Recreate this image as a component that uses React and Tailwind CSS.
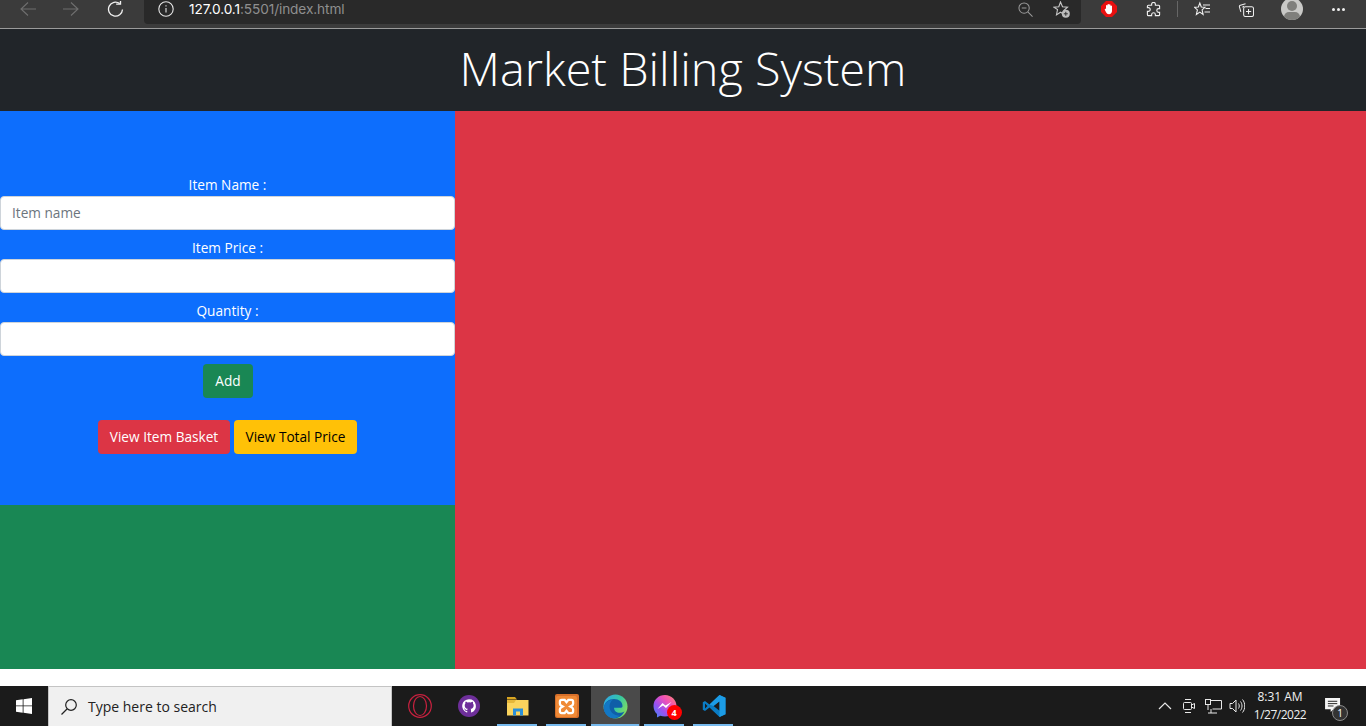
import React from "react";

const Back = ({ flip }) => (
  <svg width="16" height="14" viewBox="0 0 16 14" fill="none" stroke="#6f6f6f" strokeWidth="1.1" style={flip ? { transform: "scaleX(-1)" } : undefined}>
    <path d="M16 7H1M8 .5 1 7l7 6.500" />
  </svg>
);

const TaskCell = ({ children, underline, active }) => (
  <div className={`relative w-[49px] h-10 flex items-center justify-center ${active ? "bg-[#4a4a4a]" : ""}`}>
    {children}
    {underline && <div className={`absolute bottom-0 h-[2px] bg-[#76b9ed] ${active ? "left-0 right-[1px]" : "left-[4px] right-[5px]"}`} />}
  </div>
);

export default function App() {
  return (
    <div className="w-[1366px] h-[726px] overflow-hidden bg-white flex flex-col font-['Open_Sans','Noto_Sans',sans-serif]">
      {/* browser bar */}
      <div className="h-[29px] shrink-0 bg-[#3b3b3b] border-b border-[#9b9b9b] flex items-start">
        <div className="w-[144px] h-[18px] flex items-center shrink-0 pl-5 gap-[27px]">
          <Back />
          <Back flip />
          <svg width="17" height="17" viewBox="0 0 18 18" fill="none" stroke="#f2f2f2" strokeWidth="1.4" className="ml-[1px]">
            <path d="M13.500 2.800A7.400 7.400 0 1 0 16.400 9" />
            <path d="M9.700 3.300h4.600V0" />
          </svg>
        </div>
        <div className="w-[937px] h-6 pb-[6px] bg-[#292929] rounded-b-[4px] flex items-center shrink-0 pl-[14px]">
          <svg width="16" height="16" viewBox="0 0 16 16" fill="none" stroke="#e6e6e6" strokeWidth="1.1">
            <circle cx="8" cy="8" r="7.200" />
            <path d="M8 7v4.500M8 4.200v1.400" />
          </svg>
          <span className="ml-[15px] text-[13.650px] text-[#8f8f8f] whitespace-nowrap font-['Inter',sans-serif] tracking-[-0.1px]">
            <span className="text-white">127.0.0.1</span>:5501/index.html
          </span>
          <svg className="ml-auto" width="15" height="15" viewBox="0 0 16 16" fill="none" stroke="#9a9a9a" strokeWidth="1.100">
            <circle cx="6.500" cy="6.500" r="5.500" />
            <path d="M4 6.500h5M10.500 10.500 15.500 15.500" />
          </svg>
          <svg className="ml-[20px] mr-[11px]" width="17" height="17" viewBox="0 0 17 17" fill="none">
            <path d="M7.500 1l2 4.800 5 .4-3.700 3.300.7 3.900-4-2.200-4 2.700 1-5.300L.800 6.200l5-.4z" stroke="#c8c8c8" strokeWidth="1.100" />
            <circle cx="12.800" cy="12.800" r="4" fill="#bdbdbd" />
            <path d="M10.800 12.800h4M12.800 10.800v4" stroke="#333" strokeWidth="1" />
          </svg>
        </div>
        <div className="flex-1 h-[18px] flex items-center">
          <svg className="ml-[20px] shrink-0" width="16" height="16" viewBox="0 0 16 16">
            <path d="M5 0h6l5 5v6l-5 5H5l-5-5V5z" fill="#e81010" />
            <path d="M5 8V4.500a.8.8 0 0 1 1.500 0V3.600a.8.8 0 0 1 1.500 0v.2a.8.8 0 0 1 1.500.2v1a.8.8 0 0 1 1.500 0V10c0 2-1.300 3.200-3 3.200-1.500 0-2.300-.8-3-2L3.800 8.800c-.3-.8.700-1.400 1.200-.8z" fill="#fff" />
          </svg>
          <svg className="ml-[29px] shrink-0" width="15" height="15" viewBox="0 0 16 16" fill="none" stroke="#f0f0f0" strokeWidth="1.200">
            <path d="M6 2.400a2 2 0 0 1 4 0V3.500h3.500c.5 0 1 .4 1 1V7h-1a2 2 0 0 0 0 4h1v2.500c0 .6-.5 1-1 1H10v-1a2 2 0 0 0-4 0v1H2.500c-.6 0-1-.4-1-1V10h1a2 2 0 0 0 0-4h-1V4.500c0-.6.400-1 1-1H6z" />
          </svg>
          <div className="ml-[16px] w-px h-[16px] bg-[#666] shrink-0" />
          <svg className="ml-[16px] shrink-0" width="16" height="16" viewBox="0 0 16 16" fill="none" stroke="#f0f0f0" strokeWidth="1.100">
            <path d="M5.800 2l1.500 4 3.700.3-2.900 2.600 1 4.600-3.300-2.400-3.400 2.400 1-4.600L.5 6.300l3.900-.3zM9 4h7M11.500 7.500H16M10.500 11H16" />
          </svg>
          <svg className="ml-[28px] shrink-0" width="16" height="16" viewBox="0 0 17 17" fill="none" stroke="#f0f0f0" strokeWidth="1.100">
            <path d="M3 11.500 1.500 6c-.2-.8.200-1.400 1-1.600L8 3" />
            <path d="M5 7c0-1 .500-1.500 1.500-1.500" />
            <rect x="6" y="6" width="10.500" height="10.500" rx="2" />
            <path d="M11.200 8.500v5.500M8.500 11.200H14" />
          </svg>
          <div className="ml-[27px] w-[22px] h-[22px] rounded-full bg-[#c9c9c7] relative overflow-hidden shrink-0">
            <div className="absolute left-[6px] top-[3px] w-[10px] h-[10px] rounded-full bg-[#7f7f7c]" />
            <div className="absolute left-[3px] top-[14px] w-4 h-[10px] rounded-full bg-[#7f7f7c]" />
          </div>
          <div className="ml-[29px] flex gap-[2px] shrink-0">
            <div className="w-[3px] h-[3px] rounded-full bg-[#f0f0f0]" />
            <div className="w-[3px] h-[3px] rounded-full bg-[#f0f0f0]" />
            <div className="w-[3px] h-[3px] rounded-full bg-[#f0f0f0]" />
          </div>
        </div>
      </div>

      {/* page header */}
      <header className="h-[82px] shrink-0 bg-[#212529] flex items-center justify-center">
        <h1 className="text-white text-[46.800px] font-light leading-none -mt-[4px]">Market Billing System</h1>
      </header>

      {/* main */}
      <div className="h-[558px] shrink-0 flex">
        <div className="w-[455px] shrink-0 flex flex-col">
          <div className="h-[394px] bg-[#0d6efd] pt-[63px] flex flex-col items-center text-[13.650px] text-white">
            <label className="h-[22px] leading-[22px]">Item Name :</label>
            <input readOnly placeholder="Item name" className="w-full h-[34px] bg-white border border-[#ced4da] rounded-[4px] pl-[11px] pb-[1px] text-[13.650px] placeholder:text-[#6c757d] outline-none" />
            <label className="mt-[7px] h-[22px] leading-[22px]">Item Price :</label>
            <input readOnly className="w-full h-[34px] bg-white border border-[#ced4da] rounded-[4px] px-3 outline-none" />
            <label className="mt-[7px] h-[22px] leading-[22px]">Quantity :</label>
            <input readOnly className="w-full h-[34px] bg-white border border-[#ced4da] rounded-[4px] px-3 outline-none" />
            <button className="mt-2 w-[50px] h-[34px] bg-[#198754] rounded-[4px] text-white ml-[1px]">Add</button>
            <div className="mt-[22px] flex gap-1 ml-[-1px]">
              <button className="w-[132px] h-[34px] pl-[1px] bg-[#dc3545] rounded-[4px] text-white whitespace-nowrap">View Item Basket</button>
              <button className="w-[123px] h-[34px] pl-[1px] bg-[#ffc107] rounded-[4px] text-black whitespace-nowrap">View Total Price</button>
            </div>
          </div>
          <div className="flex-1 bg-[#198754]" />
        </div>
        <div className="flex-1 bg-[#dc3545]" />
      </div>

      <div className="h-[17px] shrink-0 bg-white" />

      {/* taskbar */}
      <div className="h-10 shrink-0 bg-[#1b1b1b] flex items-center">
        <div className="w-12 h-10 flex items-center justify-center shrink-0">
          <svg width="16" height="16" viewBox="0 0 16 16" fill="#fff">
            <path d="M0 2.300 6.700 1.300V7.500H0zM7.500 1.200 16 0v7.500H7.500zM0 8.300h6.700v6.400L0 13.700zM7.500 8.300H16V16l-8.500-1.200z" />
          </svg>
        </div>
        <div className="w-[344px] h-10 shrink-0 bg-[#f0f0f0] border border-[#c4c4c4] border-b-0 flex items-center pl-[11px]">
          <svg width="18" height="18" viewBox="0 0 18 18" fill="none" stroke="#222" strokeWidth="1.200">
            <circle cx="11" cy="7" r="5.300" />
            <path d="M7 11 1.500 16.500" />
          </svg>
          <span className="ml-[10px] text-[14px] text-[#222]">Type here to search</span>
        </div>
        <div className="w-[3px]" />
        <TaskCell>
          <svg width="24" height="24" viewBox="0 0 24 24" fill="none" stroke="#c8213f" strokeWidth="1.200">
            <circle cx="12" cy="12" r="11.300" />
            <ellipse cx="12" cy="12" rx="6.500" ry="9.500" />
          </svg>
        </TaskCell>
        <TaskCell>
          <svg width="22" height="22" viewBox="0 0 24 24">
            <circle cx="12" cy="12" r="12" fill="#6e2f9a" />
            <path fill="#fff" d="M12 4.500a7.500 7.500 0 0 0-2.400 14.600c.4.100.5-.2.500-.4v-1.400c-2.100.5-2.500-1-2.500-1-.3-.9-.8-1.100-.8-1.100-.7-.5 0-.5 0-.5.800.1 1.200.8 1.200.8.700 1.200 1.800.9 2.200.7.100-.5.300-.9.500-1.100-1.700-.2-3.400-.8-3.400-3.700 0-.8.300-1.500.8-2-.1-.2-.3-1 .1-2 0 0 .6-.2 2.100.8a7 7 0 0 1 3.800 0c1.500-1 2.100-.8 2.100-.8.400 1 .2 1.800.1 2 .5.500.8 1.200.8 2 0 2.900-1.800 3.500-3.400 3.700.3.200.5.700.5 1.400v2.100c0 .2.100.5.500.4A7.500 7.500 0 0 0 12 4.500z" />
          </svg>
        </TaskCell>
        <TaskCell underline>
          <svg width="22" height="20" viewBox="0 0 22 20">
            <path d="M0 1h8l2 2.500H0z" fill="#d9a521" />
            <path d="M0 4h21.500v15.500H0z" fill="#fbd45d" />
            <path d="M0 4h9L7 7H0z" fill="#e6b73a" />
            <path d="M6 12.500h10V19.500h-3v-4h-4v4H6z" fill="#2a8fd8" />
          </svg>
        </TaskCell>
        <TaskCell underline>
          <div className="w-6 h-6 bg-[#d8702a] rounded-[2px] flex items-center justify-center">
            <div className="w-[21px] h-[21px] bg-[#f08a36] rounded-[2px] flex items-center justify-center">
              <svg width="17" height="17" viewBox="0 0 18 18" fill="none" stroke="#fff" strokeWidth="2.400">
                <path d="M4 2h3l2 2.500L11 2h3c1.500 0 2 .8 2 2v2c0 1-.8 1.700-1.600 2.200L13 9l1.400.8c.8.500 1.600 1.200 1.600 2.200v2c0 1.200-.5 2-2 2h-3L9 13.500 7 16H4c-1.500 0-2-.8-2-2v-2c0-1 .8-1.700 1.600-2.200L5 9l-1.400-.8C2.800 7.700 2 7 2 6V4c0-1.200.5-2 2-2z" />
              </svg>
            </div>
          </div>
        </TaskCell>
        <TaskCell active underline>
          <svg width="25" height="25" viewBox="0 0 25 25">
            <defs>
              <linearGradient id="eA" x1="0" y1="0.200" x2="1" y2="0.700">
                <stop offset="0" stopColor="#2fa8e8" />
                <stop offset="0.550" stopColor="#37c8a0" />
                <stop offset="1" stopColor="#86de5c" />
              </linearGradient>
            </defs>
            <circle cx="12.500" cy="12.500" r="12" fill="url(#eA)" />
            <path d="M1 14C1 8 6 5 11 5c5 0 8.500 3 8.500 7 0 1-.5 1.700-1.500 1.700H11c0 3 2.500 5 5.500 5 2 0 3.500-.5 5-1.500-2 4.500-6 7-10 7C6 24.200 1 20 1 14z" fill="#0f5fa8" />
            <path d="M1 14c0-5 4-8 8.500-8-2 1.500-3 4-3 6.500 0 5 4 9 10 9.300-2 1.500-3.500 2.400-6 2.400C6 24.200 1 20 1 14z" fill="#1377c4" />
          </svg>
        </TaskCell>
        <TaskCell underline>
          <div className="relative w-6 h-6">
            <svg width="24" height="24" viewBox="0 0 24 24">
              <defs>
                <linearGradient id="mA" x1="0" y1="1" x2="1" y2="0">
                  <stop offset="0" stopColor="#3a8cf8" />
                  <stop offset="0.350" stopColor="#9a50f0" />
                  <stop offset="0.650" stopColor="#f04fb8" />
                  <stop offset="1" stopColor="#ff8a6a" />
                </linearGradient>
              </defs>
              <path d="M12 1C5.500 1 0.500 5.700 0.500 12c0 3.300 1.300 6.100 3.500 8v3.500l3.300-1.800c1.400.5 3 .8 4.700.8 6.500 0 11.500-4.700 11.500-10.500S18.500 1 12 1z" fill="url(#mA)" />
              <path d="M4.500 15l5-6 3 2.500 6-3.500-5.500 6-3-2.500z" fill="#fff" />
            </svg>
            <div className="absolute -right-[5px] -bottom-[2px] w-[15px] h-[15px] rounded-full bg-[#f00] text-white text-[9px] font-bold leading-[15px] text-center">4</div>
          </div>
        </TaskCell>
        <TaskCell underline>
          <svg width="24" height="24" viewBox="0 0 24 24">
            <path d="M17.500 1 23.500 3.800V20.200L17.500 23 7.500 13.500 3 17 .8 15.800V8.200L3 7l4.500 3.500zM17.500 7.200 11.500 12l6 4.800zM3 9.500v5L5.500 12z" fill="#0a7cc4" />
            <path d="M17.500 1 23.500 3.800V20.200L17.500 23zM17.500 1 7.500 10.500 11.500 12l6-4.800z" fill="#1c9ce6" />
          </svg>
        </TaskCell>

        <div className="ml-auto flex items-center h-10">
          <svg className="mr-[10px]" width="14" height="8" viewBox="0 0 14 8" fill="none" stroke="#e8e8e8" strokeWidth="1.200">
            <path d="M1 7l6-6 6 6" />
          </svg>
          <svg className="mr-[9px]" width="14" height="16" viewBox="0 0 14 16" fill="none" stroke="#e8e8e8" strokeWidth="1">
            <path d="M3 1.500h6M3 14.500h6" />
            <rect x="1.500" y="4.500" width="8" height="7" rx="1" />
            <path d="M9.500 7l3-1.500v5l-3-1.500" />
          </svg>
          <svg className="mr-[7px]" width="17" height="16" viewBox="0 0 17 16" fill="none" stroke="#e8e8e8" strokeWidth="1">
            <rect x="0.500" y="1.500" width="5" height="5" fill="#1b1b1b" />
            <path d="M5.500 2.500H16.500V11H7.500M6 11V15M3 15h9M3 6.500V12" />
          </svg>
          <svg className="mr-[5px]" width="16" height="16" viewBox="0 0 16 16" fill="none" stroke="#e8e8e8" strokeWidth="1">
            <path d="M1 5.500h2.500L7 2v12L3.500 10.500H1zM9.500 5.500c1 1.500 1 3.500 0 5M11.500 3.500c2 2.500 2 6.500 0 9M13.500 1.500c3 3.500 3 9.500 0 13" />
          </svg>
          <div className="w-[60px] text-center text-[12px] leading-[18px] text-[#f0f0f0] mr-[15px]">
            <div className="whitespace-nowrap">8:31 AM</div>
            <div className="whitespace-nowrap tracking-[-0.5px]">1/27/2022</div>
          </div>
          <div className="relative w-5 h-5 mr-[21px]">
            <svg width="17" height="15" viewBox="0 0 18 16" className="absolute left-0 top-[2px]">
              <path d="M0 0h16v12H9l-3 3v-3H0z" fill="#f5f5f5" />
              <path d="M3 3.500h10M3 6h10M3 8.500h6" stroke="#1b1b1b" strokeWidth="1" />
            </svg>
            <div className="absolute left-[7px] top-[9px] w-4 h-4 rounded-full bg-[#333] border border-[#8a8a8a] text-white text-[10px] leading-[14px] text-center">1</div>
          </div>
        </div>
      </div>
    </div>
  );
}
